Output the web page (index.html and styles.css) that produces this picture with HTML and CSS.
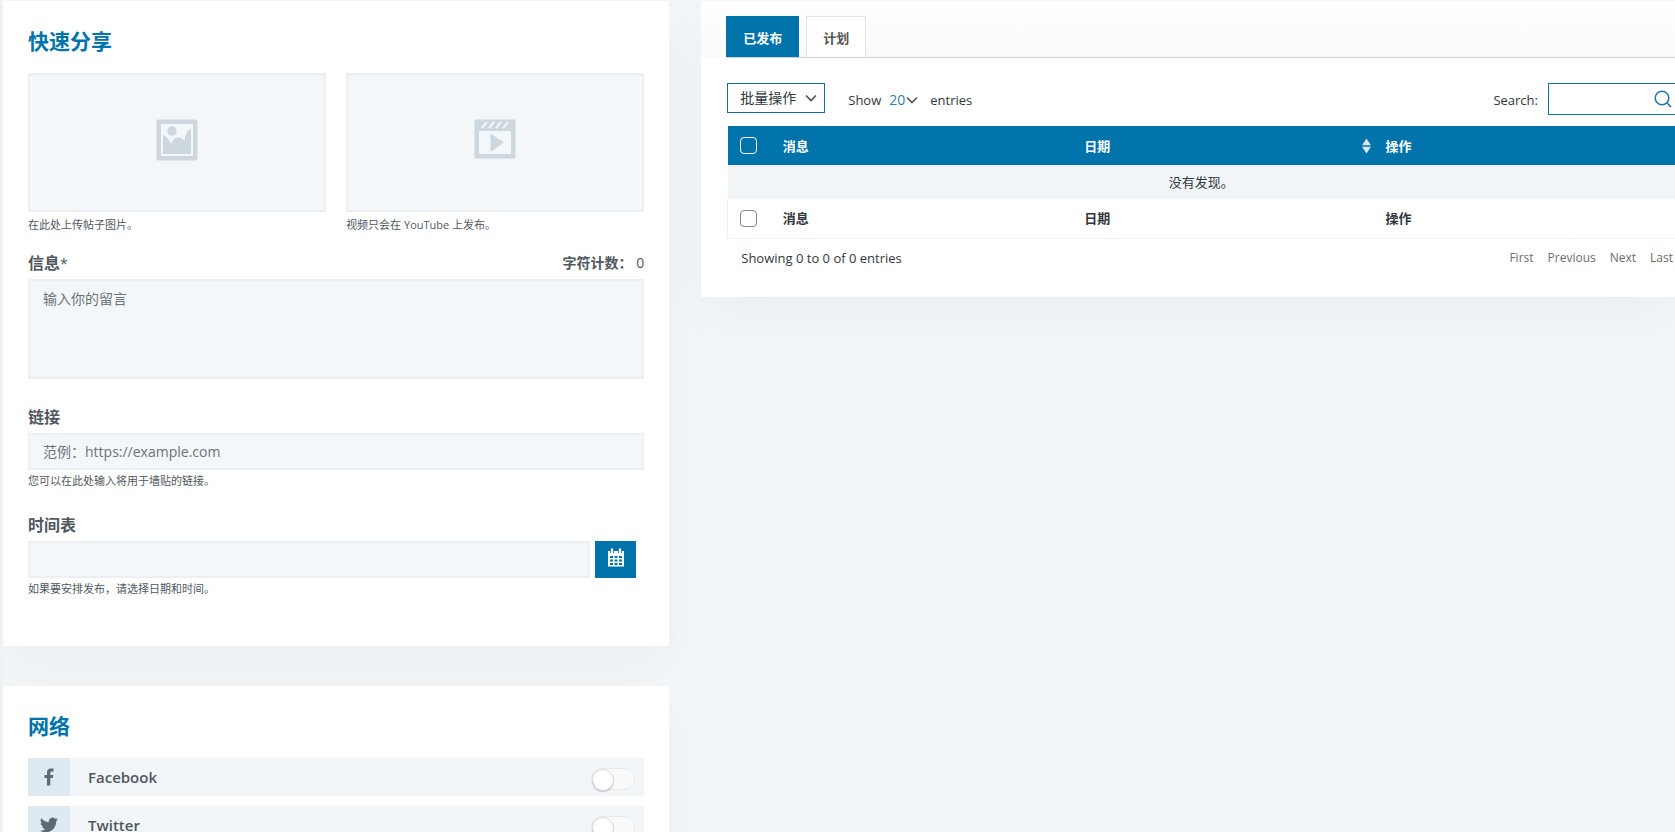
FILE: index.html
```html
<!DOCTYPE html>
<html lang="zh-CN">
<head>
<meta charset="utf-8">
<meta name="viewport" content="width=device-width, initial-scale=1">
<title>快速分享</title>
<link rel="stylesheet" href="styles.css">
</head>
<body>
<main class="page">
  <div class="column">
    <section class="panel share">
      <h2 class="panel-title">快速分享</h2>
      <div class="uploads">
        <div>
          <button class="upload" type="button" aria-label="图片">
            <svg width="42" height="42" viewBox="0 0 42 42">
              <rect x="0.5" y="0.5" width="41" height="41" rx="2" fill="#ccd8de"/>
              <rect x="5" y="5" width="32" height="32" fill="#f3f7fa"/>
              <circle cx="16" cy="12" r="4.7" fill="#ccd8de"/>
              <path d="M7 16C11 17 13 21 15 25C17 21 19 18.500 22 18.500C25 18.500 27 20 28.500 22C29 16 31 11.500 35 10V35H7Z" fill="#ccd8de"/>
            </svg>
          </button>
          <p class="hint upload-hint">在此处上传帖子图片。</p>
        </div>
        <div>
          <button class="upload" type="button" aria-label="视频">
            <svg width="42" height="42" viewBox="0 0 42 42">
              <rect x="0.500" y="0.500" width="41" height="39" rx="1" fill="#ccd8de"/>
              <rect x="5" y="12" width="32" height="23" fill="#f3f7fa"/>
              <path d="M8 9L13 3M15 9L20 3M22 9L27 3M29 9L34 3" stroke="#f3f7fa" stroke-width="2"/>
              <path d="M16.500 14.500L30 23.500L16.500 33Z" fill="#ccd8de"/>
            </svg>
          </button>
          <p class="hint upload-hint">视频只会在 YouTube 上发布。</p>
        </div>
      </div>
      <div class="label-row">
        <label class="label" for="message">信息<span class="star">*</span></label>
        <span class="counter"><b>字符计数：</b> 0</span>
      </div>
      <textarea class="field message" id="message" placeholder="输入你的留言"></textarea>
      <label class="label link-label" for="link">链接</label>
      <input class="field line-field" id="link" type="text" placeholder="范例：https://example.com">
      <p class="hint">您可以在此处输入将用于墙贴的链接。</p>
      <label class="label time-label" for="schedule">时间表</label>
      <div class="schedule">
        <input class="field line-field" id="schedule" type="text">
        <button class="calendar" type="button" aria-label="选择日期">
          <svg width="18" height="20" viewBox="0 0 18 20">
            <path d="M1 3H17V18.500H1Z" fill="#fff"/>
            <path d="M5 0.500V5M13 0.500V5" stroke="#0073aa" stroke-width="4"/>
            <path d="M5 1.500V4.500M13 1.500V4.500" stroke="#fff" stroke-width="2.400" stroke-linecap="round"/>
            <path d="M3 8H6V10H3ZM7.500 8H10.500V10H7.500ZM12 8H15V10H12ZM3 11.500H6V13.500H3ZM7.500 11.500H10.500V13.500H7.500ZM12 11.500H15V13.500H12ZM3 15H6V17H3ZM7.500 15H10.500V17H7.500ZM12 15H15V17H12Z" fill="#0073aa"/>
          </svg>
        </button>
      </div>
      <p class="hint">如果要安排发布，请选择日期和时间。</p>
    </section>

    <section class="panel networks">
      <h2 class="panel-title">网络</h2>
      <div class="network">
        <span class="network-icon">
          <svg width="18" height="18" viewBox="0 0 18 18"><path d="M7 17.500V10H4.500V7H7V4.800C7 2 8.500 0.600 11 0.600H13.500V3.600H12C10.700 3.600 10.300 4.200 10.300 5.200V7H13.300L12.900 10H10.300V17.500Z" fill="#5b6a75"/></svg>
        </span>
        <label class="network-name" for="facebook">Facebook</label>
        <input class="switch" id="facebook" type="checkbox">
      </div>
      <div class="network">
        <span class="network-icon">
          <svg width="18" height="18" viewBox="0 0 24 24"><path d="M24 4.560c-.880.390-1.830.650-2.830.770 1.020-.610 1.800-1.570 2.160-2.720-.950.560-2 .970-3.130 1.190A4.920 4.920 0 0 0 11.830 8.290C7.730 8.090 4.100 6.130 1.670 3.150a4.930 4.930 0 0 0 1.520 6.570 4.900 4.900 0 0 1-2.230-.620c-.050 2.280 1.580 4.420 3.950 4.890-.690.190-1.450.230-2.220.080.630 1.960 2.440 3.380 4.600 3.420A9.900 9.900 0 0 1 0 19.540a13.940 13.940 0 0 0 7.550 2.210c9.140 0 14.310-7.720 14-14.640.960-.690 1.800-1.560 2.450-2.550z" fill="#5b6a75"/></svg>
        </span>
        <label class="network-name" for="twitter">Twitter</label>
        <input class="switch" id="twitter" type="checkbox">
      </div>
    </section>
  </div>

  <section class="panel posts">
    <nav class="tabs">
      <button class="tab tab-active" type="button">已发布</button>
      <button class="tab" type="button">计划</button>
    </nav>
    <div class="posts-body">
      <div class="toolbar">
        <div class="select-wrap bulk">
          <select aria-label="批量操作"><option>批量操作</option></select>
          <svg class="chevron" width="12" height="8" viewBox="0 0 12 8"><path d="M1 1.500L6 6.500L11 1.500" fill="none" stroke="#555" stroke-width="1.700"/></svg>
        </div>
        <label class="length">Show
          <span class="select-wrap count">
            <select><option>20</option></select>
            <svg class="chevron" width="12" height="8" viewBox="0 0 12 8"><path d="M1 1.500L6 6.500L11 1.500" fill="none" stroke="#555" stroke-width="1.700"/></svg>
          </span>
          entries</label>
        <label class="search-label" for="search">Search:</label>
        <div class="search">
          <input id="search" type="text">
          <svg width="18" height="18" viewBox="0 0 18 18"><circle cx="8" cy="8" r="6.800" fill="none" stroke="#2475a3" stroke-width="1.500"/><path d="M13 13L17 17" stroke="#2475a3" stroke-width="1.700"/></svg>
        </div>
      </div>
      <table class="table">
        <colgroup><col class="col-check"><col><col><col></colgroup>
        <thead>
          <tr>
            <th><input class="check" type="checkbox" aria-label="全选"></th>
            <th>消息</th>
            <th class="sort-cell"><div class="sortable">日期
              <svg width="9" height="16" viewBox="0 0 9 16"><path d="M4.500 0.500L9 7.200H0ZM0 8.800H9L4.500 15.500Z" fill="#d5e8f5"/></svg>
            </div></th>
            <th>操作</th>
          </tr>
        </thead>
        <tbody><tr><td colspan="4">没有发现。</td></tr></tbody>
        <tfoot>
          <tr>
            <th><input class="check" type="checkbox" aria-label="全选"></th>
            <th>消息</th>
            <th>日期</th>
            <th>操作</th>
          </tr>
        </tfoot>
      </table>
      <div class="table-foot">
        <span>Showing 0 to 0 of 0 entries</span>
        <nav class="pager"><a href="#">First</a><a href="#">Previous</a><a href="#">Next</a><a href="#">Last</a></nav>
      </div>
    </div>
  </section>
</main>
</body>
</html>
```
FILE: styles.css
```css
* {
  box-sizing: border-box;
}

body {
  margin: 0;
  background: #f2f6f9;
  color: #50575e;
  font: 13px/20px "Open Sans", "Noto Sans CJK SC", sans-serif;
}

button, input, select, textarea {
  margin: 0;
  font: inherit;
  color: inherit;
  border-radius: 0;
}

.page {
  display: grid;
  grid-template-columns: 13fr 19fr;
  column-gap: 32px;
  align-items: start;
  height: 100vh;
  overflow: hidden;
  padding-top: 1px;
  border-left: 3px solid #f1f1f1;
}

.column {
  display: grid;
  gap: 40px;
}

.panel {
  background: #fff;
  box-shadow: 0 20px 50px rgba(0, 0, 0, 0.03);
}

.share {
  padding: 24px 25px 49px;
}

.networks {
  padding: 24px 25px;
}

.panel-title {
  margin: 0 0 16px;
  font-size: 21px;
  line-height: 32px;
  font-weight: 700;
  color: #0073aa;
}

.uploads {
  display: grid;
  grid-template-columns: 1fr 1fr;
  gap: 20px;
}

.upload {
  display: flex;
  align-items: center;
  justify-content: center;
  width: 100%;
  height: 139px;
  padding: 0 0 6px;
  background: #f3f7fa;
  border: 2px solid #ebeff2;
}

.hint {
  margin: 3px 0 0;
  font-size: 11px;
  line-height: 16px;
}

.upload-hint {
  margin-top: 5px;
}

.label-row {
  display: flex;
  justify-content: space-between;
  height: 28px;
  margin-top: 18px;
}

.label {
  display: block;
  margin-bottom: 4px;
  font-size: 16px;
  line-height: 24px;
  font-weight: 600;
}

.star {
  font-size: 14px;
  font-weight: 400;
}

.counter {
  font-size: 14px;
  line-height: 24px;
}

.counter b {
  font-weight: 600;
}

.field {
  display: block;
  width: 100%;
  padding: 8px 13px;
  background: #f3f7fa;
  border: 2px solid #ebf0f4;
  font-size: 14px;
  line-height: 20px;
  resize: none;
}

.field::placeholder {
  color: #6c7378;
  opacity: 1;
}

.message {
  height: 100px;
}

.line-field {
  height: 37px;
}

.link-label {
  margin-top: 26px;
}

.time-label {
  margin-top: 24px;
}

.schedule {
  display: flex;
  gap: 5px;
  padding-right: 8px;
}

.calendar {
  display: flex;
  flex: 0 0 41px;
  justify-content: center;
  padding: 7px 0 0;
  background: #0073aa;
  border: 0;
}

.network {
  display: flex;
  align-items: center;
  height: 38px;
  margin-bottom: 10px;
  padding-right: 9px;
  background: #f3f6f9;
}

.network-icon {
  display: flex;
  align-items: center;
  justify-content: center;
  width: 42px;
  height: 100%;
  background: #dfe9f2;
}

.network-name {
  flex: 1;
  padding-left: 18px;
  font-size: 15px;
  font-weight: 600;
}

.switch {
  appearance: none;
  width: 44px;
  height: 22px;
  margin-top: 4px;
  border: 1px solid #e6e8ea;
  border-radius: 11px;
  background: #fafafa;
}

.switch::before {
  content: "";
  display: block;
  width: 20px;
  height: 20px;
  border: 1px solid #dcdcdc;
  border-radius: 50%;
  background: #fff;
  box-shadow: 0 1px 1px rgba(0, 0, 0, 0.2);
}

.posts {
  min-width: 0;
}

.tabs {
  display: flex;
  gap: 7px;
  padding: 15px 0 0 25px;
  background: linear-gradient(#fff, #fafafa) padding-box;
  position: relative;
}

.tabs::after {
  content: "";
  position: absolute;
  left: 25px;
  right: 0;
  bottom: -1px;
  height: 1px;
  background: #d0d3d6;
}

.tab {
  height: 41px;
  padding: 2px 16px 0;
  background: #fff;
  border: 1px solid #e2e4e7;
  border-bottom: 0;
  color: #555;
  font-weight: 700;
}

.tab-active {
  background: #0073aa;
  border-color: #0073aa;
  color: #fff;
}

.posts-body {
  padding: 26px 0 29px 26px;
  color: #32373c;
}

.toolbar {
  display: flex;
  align-items: flex-start;
  height: 43px;
}

.select-wrap {
  display: inline-grid;
  align-items: center;
}

.select-wrap > * {
  grid-area: 1 / 1;
}

.select-wrap select {
  appearance: none;
  background: transparent;
  border: 0;
  padding: 0;
}

.chevron {
  justify-self: end;
  pointer-events: none;
}

.bulk .chevron {
  margin-right: 8px;
}

.bulk select {
  width: 98px;
  height: 30px;
  padding: 0 12px;
  border: 1px solid #16709c;
  font-size: 14px;
}

.length {
  display: flex;
  align-items: center;
  height: 34px;
  margin-left: 23px;
}

.count {
  margin: 0 12px 0 8px;
}

.count select {
  width: 29px;
  color: #2e7ca8;
  font-size: 14px;
}

.search-label {
  margin-left: auto;
  line-height: 34px;
}

.search {
  display: flex;
  align-items: center;
  width: 127px;
  height: 32px;
  margin-left: 10px;
  padding-right: 3px;
  border: 1px solid #16709c;
  border-right: 0;
}

.search input {
  flex: 1;
  min-width: 0;
  border: 0;
  padding: 0 8px;
  background: transparent;
}

.table {
  width: 100%;
  table-layout: fixed;
  border-collapse: collapse;
}

.col-check {
  width: 43px;
}

.table th {
  height: 39px;
  padding: 0 12px;
  text-align: left;
  font-weight: 700;
}

.table .sort-cell {
  padding-right: 3px;
}

.table thead {
  background: #0073aa;
  color: #fff;
}

.table td {
  height: 34px;
  padding: 0;
  background: #f2f5f8;
  text-align: center;
}

.table tfoot {
  border-bottom: 1px solid #eef1f4;
  border-left: 1px solid #eef1f4;
}

.check {
  display: block;
  appearance: none;
  width: 17px;
  height: 17px;
  border: 1px solid #82878c;
  border-radius: 4px;
  background: #fff;
}

.table thead .check {
  border-color: #fff;
  background: transparent;
}

.sortable {
  display: flex;
  align-items: center;
  justify-content: space-between;
}

.table-foot {
  display: flex;
  justify-content: space-between;
  margin-top: 9px;
  padding: 0 2px 0 14px;
}

.pager {
  display: flex;
  gap: 14px;
  font-size: 12px;
}

.pager a {
  color: #6c6c6c;
  text-decoration: none;
}
```
